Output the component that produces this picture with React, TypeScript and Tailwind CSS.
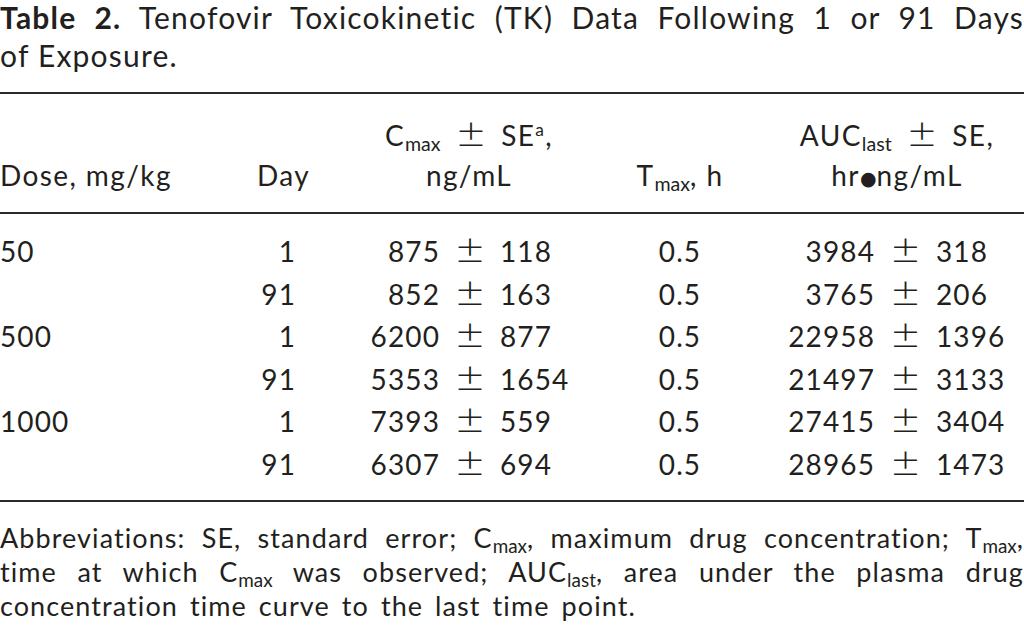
import * as React from "react";

type Row = { dose: string; day: string; cmax: [string, string]; tmax: string; auc: [string, string] };

const ROWS: Row[] = [
  { dose: "50", day: "1", cmax: ["875", "118"], tmax: "0.5", auc: ["3984", "318"] },
  { dose: "", day: "91", cmax: ["852", "163"], tmax: "0.5", auc: ["3765", "206"] },
  { dose: "500", day: "1", cmax: ["6200", "877"], tmax: "0.5", auc: ["22958", "1396"] },
  { dose: "", day: "91", cmax: ["5353", "1654"], tmax: "0.5", auc: ["21497", "3133"] },
  { dose: "1000", day: "1", cmax: ["7393", "559"], tmax: "0.5", auc: ["27415", "3404"] },
  { dose: "", day: "91", cmax: ["6307", "694"], tmax: "0.5", auc: ["28965", "1473"] },
];

const COLS = "grid grid-cols-[240px_56px_324px_120px_1fr]";

function Sub({ children }: { children: React.ReactNode }) {
  return <span className="relative top-[0.28em] text-[0.7em] leading-none tracking-normal">{children}</span>;
}

// the ± in the source is a wide math glyph, Lato's is too small
function Pm({ className = "" }: { className?: string }) {
  return (
    <span className={`font-['DejaVu_Sans',sans-serif] text-[1.3em] leading-none tracking-normal font-light ${className}`}>
      ±
    </span>
  );
}

function PlusMinus({ value, se, left, mid }: { value: string; se: string; left: string; mid: string }) {
  return (
    <div className="flex h-[42.5px]">
      <span className={`${left} text-right`}>{value}</span>
      <span className={`${mid} text-center`}>
        <Pm />
      </span>
      <span>{se}</span>
    </div>
  );
}

export default function App() {
  return (
    <div className="w-[1024px] h-[635px] overflow-hidden bg-white text-[#231f20] font-[Lato,sans-serif]">
      <div className="text-[30px] leading-[38px] tracking-[0.04em] -mt-[2px]">
        <div className="[text-align-last:justify]">
          <span className="font-bold">Table 2.</span> Tenofovir Toxicokinetic (TK) Data Following 1 or 91 Days
        </div>
        <div>of Exposure.</div>
      </div>

      <div className="mt-[18px] border-t-2 border-[#2b2b2b]" />

      <div className={`${COLS} items-end text-[28px] leading-[40px] tracking-[0.05em] pt-[21px] pb-[17px]`}>
        <div className="whitespace-nowrap">Dose, mg/kg</div>
        <div className="pl-[17px] whitespace-nowrap">Day</div>
        <div className="text-center pl-[22px] whitespace-nowrap">
          <div className="h-[40px]">
            C<Sub>max</Sub>
            <Pm className="mx-[15px]" />
            SE<sup className="text-[0.62em] -top-[0.6em]">a</sup>,
          </div>
          <div>ng/mL</div>
        </div>
        <div className="text-center whitespace-nowrap">
          T<Sub>max</Sub>, h
        </div>
        <div className="text-center pl-[30px] whitespace-nowrap">
          <div className="h-[40px]">
            AUC<Sub>last</Sub>
            <Pm className="mx-[15px]" />
            SE,
          </div>
          <div>
            hr<span className="font-['DejaVu_Sans',sans-serif] text-[19px] leading-none tracking-normal relative -top-[1px]">●</span>ng/mL
          </div>
        </div>
      </div>

      <div className="border-t-2 border-[#2b2b2b]" />

      <div className="text-[28px] leading-[42.5px] tracking-[0.04em] pt-[16px] pb-[15px]">
        {ROWS.map((r, i) => (
          <div key={i} className={`${COLS} h-[42.5px]`}>
            <div>{r.dose}</div>
            <div className="text-right">{r.day}</div>
            <PlusMinus value={r.cmax[0]} se={r.cmax[1]} left="w-[144px]" mid="w-[60px]" />
            <div className="text-center">{r.tmax}</div>
            <PlusMinus value={r.auc[0]} se={r.auc[1]} left="w-[135px]" mid="w-[61px]" />
          </div>
        ))}
      </div>

      <div className="border-t-2 border-[#2b2b2b]" />

      <div className="text-[27px] leading-[34px] tracking-[0.04em] [word-spacing:4px] pt-[19px]">
        <div className="[text-align-last:justify]">
          Abbreviations: SE, standard error; C<Sub>max</Sub>, maximum drug concentration; T<Sub>max</Sub>,
        </div>
        <div className="[text-align-last:justify]">
          time at which C<Sub>max</Sub> was observed; AUC<Sub>last</Sub>, area under the plasma drug
        </div>
        <div>concentration time curve to the last time point.</div>
      </div>
    </div>
  );
}
